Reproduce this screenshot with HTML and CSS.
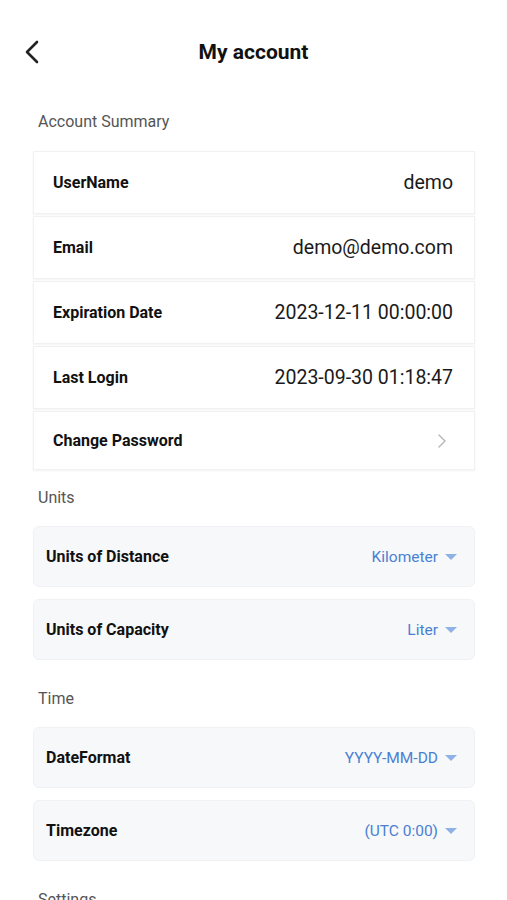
FILE: index.html
```html
<!DOCTYPE html>
<html lang="en">
<head>
    <meta charset="UTF-8">
    <meta name="viewport" content="width=device-width, initial-scale=1.0">
    <title>My account</title>
    <link rel="stylesheet" href="styles.css">
</head>
<body>
    <div class="header">
        <span class="back">
            <svg width="16" height="24" viewBox="0 0 16 24"><path d="M13 2 L3 12 L13 22" fill="none" stroke="#222" stroke-width="2.6" stroke-linecap="round" stroke-linejoin="round"/></svg>
        </span>
        <h1>My account</h1>
    </div>

    <div class="content">
        <h2 class="section-title first">Account Summary</h2>
        <div class="summary">
            <div class="row">
                <span class="label">UserName</span>
                <span class="value">demo</span>
            </div>
            <div class="row">
                <span class="label">Email</span>
                <span class="value">demo@demo.com</span>
            </div>
            <div class="row">
                <span class="label">Expiration Date</span>
                <span class="value">2023-12-11 00:00:00</span>
            </div>
            <div class="row">
                <span class="label">Last Login</span>
                <span class="value">2023-09-30 01:18:47</span>
            </div>
            <div class="row last">
                <span class="label">Change Password</span>
                <svg class="arrow" width="10" height="16" viewBox="0 0 10 16"><path d="M2 2 L8 8 L2 14" fill="none" stroke="#b5b5b5" stroke-width="1.4" stroke-linecap="round" stroke-linejoin="round"/></svg>
            </div>
        </div>

        <h2 class="section-title">Units</h2>
        <div class="options">
            <div class="option">
                <span class="option-label">Units of Distance</span>
                <span class="select">Kilometer <i class="caret"></i></span>
            </div>
            <div class="option">
                <span class="option-label">Units of Capacity</span>
                <span class="select">Liter <i class="caret"></i></span>
            </div>
        </div>

        <h2 class="section-title">Time</h2>
        <div class="options">
            <div class="option">
                <span class="option-label">DateFormat</span>
                <span class="select">YYYY-MM-DD <i class="caret"></i></span>
            </div>
            <div class="option">
                <span class="option-label">Timezone</span>
                <span class="select">(UTC 0:00) <i class="caret"></i></span>
            </div>
        </div>

        <h2 class="section-title">Settings</h2>
    </div>
</body>
</html>
```

FILE: styles.css
```css
body {
    margin: 0;
    background-color: #ffffff;
    font-family: Roboto, 'Noto Sans', sans-serif;
    color: #111;
}

.header {
    position: relative;
    height: 104px;
    display: flex;
    align-items: center;
    justify-content: center;
}

.header h1 {
    margin: 0;
    font-size: 21px;
    font-weight: 700;
    color: #111;
}

.back {
    position: absolute;
    left: 24px;
    top: 40px;
    display: flex;
}

.content {
    padding: 0 32px 0 33px;
}

.section-title {
    margin: 18px 0 18px 5px;
    font-size: 16px;
    line-height: 20px;
    font-weight: 400;
    color: #555;
}

.section-title.first {
    margin-top: 8px;
    margin-bottom: 19px;
}

.options + .section-title {
    margin-top: 29px;
}

.summary {
    display: flex;
    flex-direction: column;
    gap: 2px;
}

.row {
    height: 61px;
    display: flex;
    align-items: center;
    justify-content: space-between;
    padding: 0 21px 0 19px;
    background-color: #fff;
    border: 1px solid #f1f1f1;
    box-shadow: 0 1px 2px rgba(0, 0, 0, 0.05);
}

.row.last {
    height: 57px;
    padding-right: 27px;
}

.label {
    font-size: 16px;
    font-weight: 700;
    color: #111;
}

.value {
    font-size: 19.5px;
    color: #1a1a1a;
}

.options {
    display: flex;
    flex-direction: column;
    gap: 12px;
}

.option {
    height: 61px;
    display: flex;
    align-items: center;
    justify-content: space-between;
    padding: 0 17px 0 12px;
    background-color: #f7f8fa;
    border: 1px solid #f0f1f4;
    border-radius: 6px;
    box-sizing: border-box;
}

.option-label {
    font-size: 16px;
    font-weight: 700;
    color: #111;
}

.select {
    display: flex;
    align-items: center;
    gap: 7px;
    font-size: 15.5px;
    color: #4a80d3;
}

.caret {
    width: 0;
    height: 0;
    border-left: 6px solid transparent;
    border-right: 6px solid transparent;
    border-top: 6px solid #8fb2e6;
}
```
